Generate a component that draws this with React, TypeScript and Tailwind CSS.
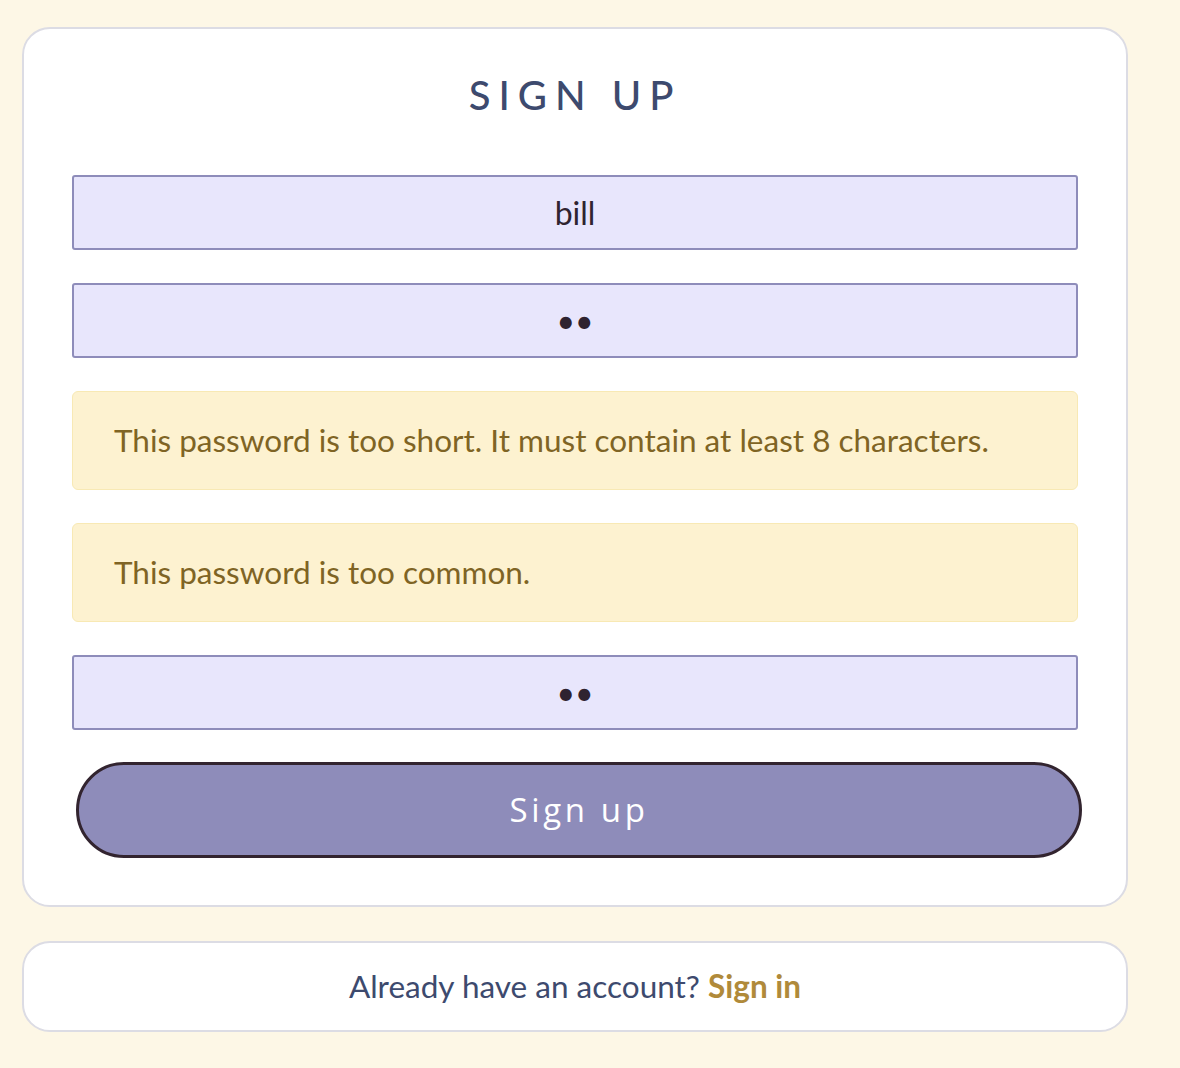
import React from "react";

const errors = [
  "This password is too short. It must contain at least 8 characters.",
  "This password is too common.",
];

function Field({ value, type = "text" }: { value: string; type?: string }) {
  return (
    <input
      readOnly
      type={type}
      value={value}
      className="block w-full h-[75px] rounded-[3px] border-2 border-[#8e8cba] bg-[#e8e6fc] text-center text-[32px] text-[#2f2330] outline-none"
    />
  );
}

function Alert({ children }: { children: React.ReactNode }) {
  return (
    <div className="flex h-[99px] items-center rounded-md border border-[#f8e9b4] bg-[#fdf2d0] px-[41px] text-[31.5px] text-[#7f6424]">
      {children}
    </div>
  );
}

export default function App() {
  return (
    <div className="min-h-[1068px] bg-[#fdf7e6] px-[22px] pt-[27px] font-['Lato',sans-serif]">
      <div className="w-[1106px] rounded-[28px] border-2 border-[#dcdce4] bg-white px-[48px] pt-[36px] pb-[47px]">
        <h1 className="text-center text-[40px] leading-[60px] font-medium tracking-[0.2em] text-[#3d4a6e]">
          SIGN UP
        </h1>
        <div className="mt-[50px] flex flex-col gap-[33px]">
          <Field value="bill" />
          <Field value="ab" type="password" />
          {errors.map((e) => (
            <Alert key={e}>{e}</Alert>
          ))}
          <Field value="ab" type="password" />
        </div>
        <button className="mt-[32px] ml-[4px] block h-[96px] w-full rounded-full border-[3px] border-[#32242f] bg-[#8e8cba] text-[33px] tracking-[0.11em] text-white font-['Open_Sans',sans-serif]">
          Sign up
        </button>
      </div>
      <div className="mt-[34px] flex h-[91px] w-[1106px] items-center justify-center rounded-[28px] border-2 border-[#dcdce4] bg-white text-[31.5px] text-[#3d4a6e]">
        <span>
          Already have an account?{" "}
          <a href="#" className="font-bold text-[#b08a3a]">
            Sign in
          </a>
        </span>
      </div>
    </div>
  );
}
